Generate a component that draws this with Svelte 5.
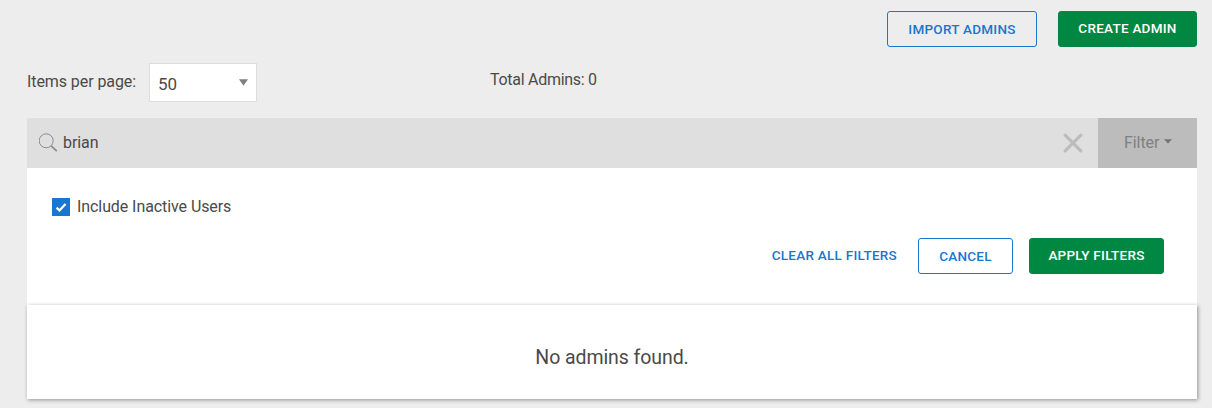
<script>
  let query = $state('brian');
  let total = $state(0);
  let inactive = $state(true);
</script>

<main>
  <div class="actions">
    <button class="btn outline import"><span>IMPORT ADMINS</span></button>
    <button class="btn solid create"><span>CREATE ADMIN</span></button>
  </div>

  <div class="meta">
    <span class="label"><span>Items per page:</span></span>
    <div class="select"><span>50</span><svg width="9" height="7" viewBox="0 0 9 7"><path d="M0 .3h9L4.5 6.7z" fill="#808080" /></svg></div>
    <span class="total">Total Admins: {total}</span>
  </div>

  <div class="search">
    <svg class="glass" width="20" height="20" viewBox="0 0 20 20" fill="none" stroke="#8b8b8b">
      <circle cx="7.2" cy="7.8" r="7" stroke-width="1" />
      <path d="M12.2 12.8l5.6 5.4" stroke-width="1.7" />
    </svg>
    <span class="query">{query}</span>
    <svg class="clear" width="20" height="20" viewBox="0 0 20 20"><path d="M2.2 2.2l15.6 15.6M17.8 2.2L2.2 17.8" stroke="#bcbcbc" stroke-width="3.2" stroke-linecap="round" /></svg>
    <div class="filter"><span>Filter</span><svg width="8" height="5" viewBox="0 0 8 5"><path d="M0 .2h8L4 4.4z" fill="#747474" /></svg></div>
  </div>

  <section class="panel">
    <label class="check">
      <span class="box" role="checkbox" aria-checked={inactive} tabindex="0">
        <svg width="18" height="18" viewBox="0 0 18 18" fill="none"><path d="M4.6 9.6l2.9 2.9 6-6.6" stroke="#fff" stroke-width="2.2" /></svg>
      </span>
      <span class="checktext">Include Inactive Users</span>
    </label>
    <div class="buttons">
      <button class="link"><span>CLEAR ALL FILTERS</span></button>
      <button class="btn outline cancel"><span>CANCEL</span></button>
      <button class="btn solid apply"><span>APPLY FILTERS</span></button>
    </div>
  </section>

  <section class="empty"><span>No admins found.</span></section>
</main>

<style>
  :global(body) { background: #ededed; }
  main {
    box-sizing: border-box;
    width: 1212px;
    height: 408px;
    padding: 11px 15px 0 27px;
    overflow: hidden;
    background: #ededed;
    color: #4a4a4a;
    font: 400 16px/20px Roboto, sans-serif;
    letter-spacing: -.08px;
    white-space: nowrap;
  }
  svg { display: block; flex: none; }
  .actions { display: flex; justify-content: flex-end; gap: 21px; height: 36px; }
  button { font: 500 13.5px/18px Roboto, sans-serif; letter-spacing: .26px; padding: 0; margin: 0; white-space: nowrap; }
  .btn { box-sizing: border-box; height: 36px; border-radius: 3px; border: 1px solid #1976d2; }
  .outline { background: transparent; color: #1976d2; padding-bottom: 1px; }
  .solid { background: #008842; border-color: #008842; color: #fff; padding-bottom: 3px; }
  .import { width: 150px; }
  .create { width: 139px; }
  .meta { display: flex; height: 39px; margin-top: 16px; }
  .label { width: 122px; padding-top: 9px; }
  .select {
    box-sizing: border-box;
    display: flex;
    justify-content: space-between;
    width: 108px;
    height: 39px;
    padding: 10px 8px 0;
    border: 1px solid #ddd;
    background: #fff;
    font-size: 17px;
  }
  .select svg { margin-top: 5px; }
  .total { margin-left: 233px; padding-top: 7px; letter-spacing: -.28px; }
  .search {
    display: flex;
    align-items: center;
    height: 50px;
    margin-top: 16px;
    background: #dfdfdf;
    border-radius: 2px 0 0 0;
  }
  .glass { margin-left: 12px; }
  .query { flex: 1; margin-left: 4px; }
  .clear { margin-right: 15px; }
  .filter {
    box-sizing: border-box;
    display: flex;
    gap: 5px;
    width: 99px;
    height: 50px;
    padding: 15px 0 0 26px;
    background: #bcbcbc;
    color: #808080;
  }
  .filter svg { margin-top: 6px; }
  .panel { height: 137px; background: #fff; }
  .check { display: flex; padding: 30px 0 0 25px; height: 18px; }
  .box { width: 18px; height: 18px; background: #1976d2; }
  .checktext { margin: -1px 0 0 7px; }
  .buttons { display: flex; justify-content: flex-end; padding: 22px 33px 0 0; }
  .link { box-sizing: border-box; border: 0; background: none; color: #1976d2; margin-right: 21px; height: 35px; padding-bottom: 2px; }
  .cancel { width: 95px; margin-right: 16px; }
  .apply { width: 135px; }
  .empty {
    position: relative;
    height: 94px;
    background: #fff;
    box-shadow: 1px 1px 4px rgba(0, 0, 0, .4);
    text-align: center;
    font-size: 19.5px;
    line-height: 24px;
  }
  .empty span { display: block; padding-top: 41px; }
</style>
